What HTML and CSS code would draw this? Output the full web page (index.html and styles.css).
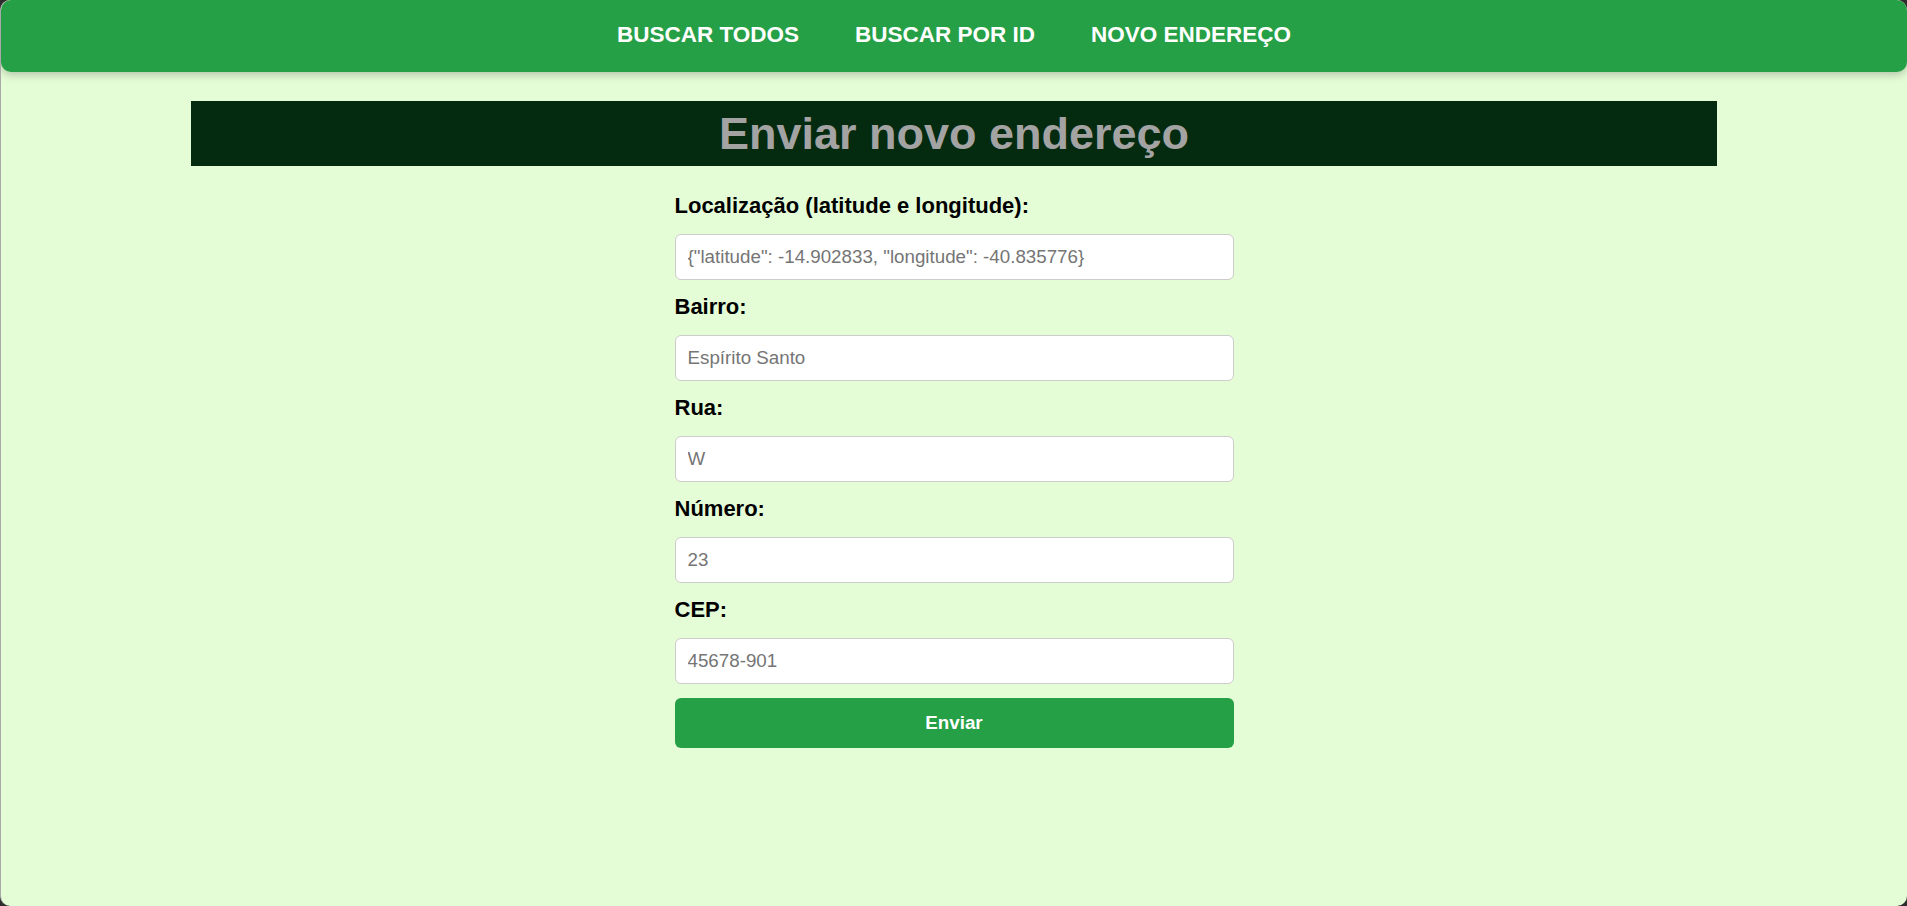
FILE: index.html
```html
<!DOCTYPE html>
<html lang="pt-BR">
<head>
<meta charset="utf-8">
<title>Enviar novo endereço</title>
<link rel="stylesheet" href="styles.css">
</head>
<body>
<div class="window">
  <nav class="topnav">
    <a class="nav-link" href="#">BUSCAR TODOS</a>
    <a class="nav-link" href="#">BUSCAR POR ID</a>
    <a class="nav-link" href="#">NOVO ENDEREÇO</a>
  </nav>
  <header class="page-header">
    <h1 class="page-title">Enviar novo endereço</h1>
  </header>
  <form class="address-form">
    <label class="field-label" for="loc">Localização (latitude e longitude):</label>
    <input class="field-input" id="loc" type="text" placeholder='{"latitude": -14.902833, "longitude": -40.835776}'>
    <label class="field-label" for="bairro">Bairro:</label>
    <input class="field-input" id="bairro" type="text" placeholder="Espírito Santo">
    <label class="field-label" for="rua">Rua:</label>
    <input class="field-input" id="rua" type="text" placeholder="W">
    <label class="field-label" for="numero">Número:</label>
    <input class="field-input" id="numero" type="text" placeholder="23">
    <label class="field-label" for="cep">CEP:</label>
    <input class="field-input" id="cep" type="text" placeholder="45678-901">
    <button class="submit-btn" type="button">Enviar</button>
  </form>
</div>
</body>
</html>
```

FILE: styles.css
```css
html {
  margin: 0;
  padding: 0;
  background: #2e2e2e;
  height: 100%;
}

body {
  margin: 0;
  height: 100%;
  font-family: "Liberation Sans", Arial, sans-serif;
}

.window {
  box-sizing: border-box;
  height: 100%;
  background: #e5fdd7;
  border-left: 1px solid #a9a9a9;
  border-radius: 10px;
  overflow: hidden;
}

.topnav {
  box-sizing: border-box;
  height: 72px;
  padding-bottom: 2px;
  background: #26a046;
  border-radius: 10px;
  box-shadow: 0 3px 8px rgba(0, 0, 0, 0.22);
  display: flex;
  justify-content: center;
  align-items: center;
  gap: 56px;
}

.nav-link {
  color: #ffffff;
  text-decoration: none;
  font-weight: bold;
  font-size: 22.5px;
}

.page-header {
  width: 80.1%;
  margin: 29px auto 0;
  height: 65px;
  background: #042a0f;
  display: flex;
  justify-content: center;
  align-items: center;
}

.page-title {
  margin: 0;
  font-size: 45px;
  line-height: 65px;
  font-weight: bold;
  color: #a3a3a3;
}

.address-form {
  width: 559px;
  margin: 27px auto 0;
  display: flex;
  flex-direction: column;
}

.field-label {
  font-weight: bold;
  font-size: 22px;
  color: #000000;
  margin-bottom: 15px;
}

.field-input {
  box-sizing: border-box;
  width: 100%;
  height: 46px;
  margin: 0 0 14px;
  padding: 0 12px;
  border: 1px solid #cccccc;
  border-radius: 6px;
  background: #ffffff;
  font-family: "Liberation Sans", Arial, sans-serif;
  font-size: 18.75px;
  color: #333333;
  outline: none;
}

.field-input::placeholder {
  color: #757575;
  opacity: 1;
}

.submit-btn {
  box-sizing: border-box;
  width: 100%;
  height: 50px;
  border: none;
  border-radius: 6px;
  background: #26a046;
  color: #ffffff;
  font-family: "Liberation Sans", Arial, sans-serif;
  font-weight: bold;
  font-size: 18.75px;
  cursor: pointer;
}
```
